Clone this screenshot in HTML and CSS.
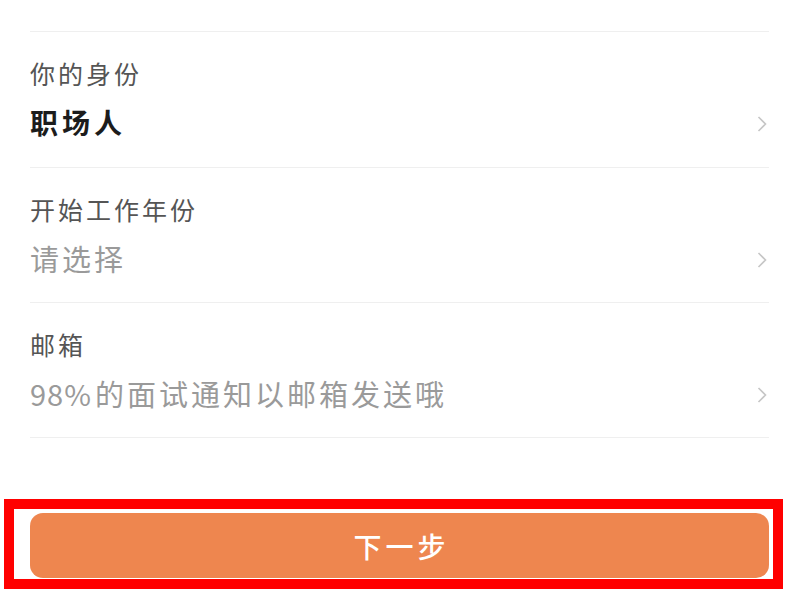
FILE: index.html
```html
<!DOCTYPE html>
<html lang="zh-CN">
<head>
<meta charset="utf-8">
<title>完善信息</title>
<link rel="stylesheet" href="styles.css">
</head>
<body>
<div class="form">
  <div class="top-line"></div>
  <div class="row first">
    <div class="texts">
      <div class="label">你的身份</div>
      <div class="value strong">职场人</div>
    </div>
    <svg class="chev" viewBox="0 0 10 16" width="10" height="16"><path d="M1.5 1 L8.5 8 L1.5 15" fill="none" stroke="#c6c6c6" stroke-width="1.6"/></svg>
  </div>
  <div class="row">
    <div class="texts">
      <div class="label">开始工作年份</div>
      <div class="value placeholder">请选择</div>
    </div>
    <svg class="chev" viewBox="0 0 10 16" width="10" height="16"><path d="M1.5 1 L8.5 8 L1.5 15" fill="none" stroke="#c6c6c6" stroke-width="1.6"/></svg>
  </div>
  <div class="row">
    <div class="texts">
      <div class="label">邮箱</div>
      <div class="value placeholder"><span class="num">98%</span>的面试通知以邮箱发送哦</div>
    </div>
    <svg class="chev" viewBox="0 0 10 16" width="10" height="16"><path d="M1.5 1 L8.5 8 L1.5 15" fill="none" stroke="#c6c6c6" stroke-width="1.6"/></svg>
  </div>
</div>
<div class="highlight">
  <button class="next">下一步</button>
</div>
</body>
</html>
```

FILE: styles.css
```css
html, body {
  margin: 0;
  padding: 0;
  background: #ffffff;
  font-family: "Noto Sans CJK SC", "Noto Sans", sans-serif;
}
body {
  width: 800px;
  height: 600px;
  overflow: hidden;
}
.form {
  padding: 0 31px 0 30px;
}
.top-line {
  height: 31px;
  border-bottom: 1px solid #efefef;
}
.row {
  display: flex;
  align-items: flex-start;
  justify-content: space-between;
  padding: 25px 0 26px;
  border-bottom: 1px solid #efefef;
}
.row.first {
  padding-bottom: 27px;
}
.texts {
  display: flex;
  flex-direction: column;
  gap: 15px;
}
.label {
  font-size: 25px;
  line-height: 32px;
  height: 32px;
  letter-spacing: 3px;
  color: #555555;
}
.value {
  font-size: 29px;
  line-height: 36px;
  height: 36px;
  letter-spacing: 3px;
}
.num {
  letter-spacing: 1px;
  margin-right: 3px;
}
.strong {
  font-weight: 700;
  color: #1c1c1c;
  font-size: 28px;
  letter-spacing: 4px;
}
.placeholder {
  color: #9a9a9a;
}
.chev {
  margin-top: 59px;
  margin-right: 2px;
}
.highlight {
  box-sizing: border-box;
  margin: 61px 0 0 4px;
  width: 779px;
  height: 90px;
  border: 10px solid #ff0000;
  padding: 4px 4px 0 16px;
}
.next {
  display: block;
  width: 100%;
  height: 65px;
  border: none;
  border-radius: 13px;
  background: #ee864f;
  color: #ffffff;
  font-family: "Noto Sans CJK SC", sans-serif;
  font-size: 28px;
  font-weight: 500;
  letter-spacing: 4px;
  text-indent: 4px;
  padding: 0;
}
```
